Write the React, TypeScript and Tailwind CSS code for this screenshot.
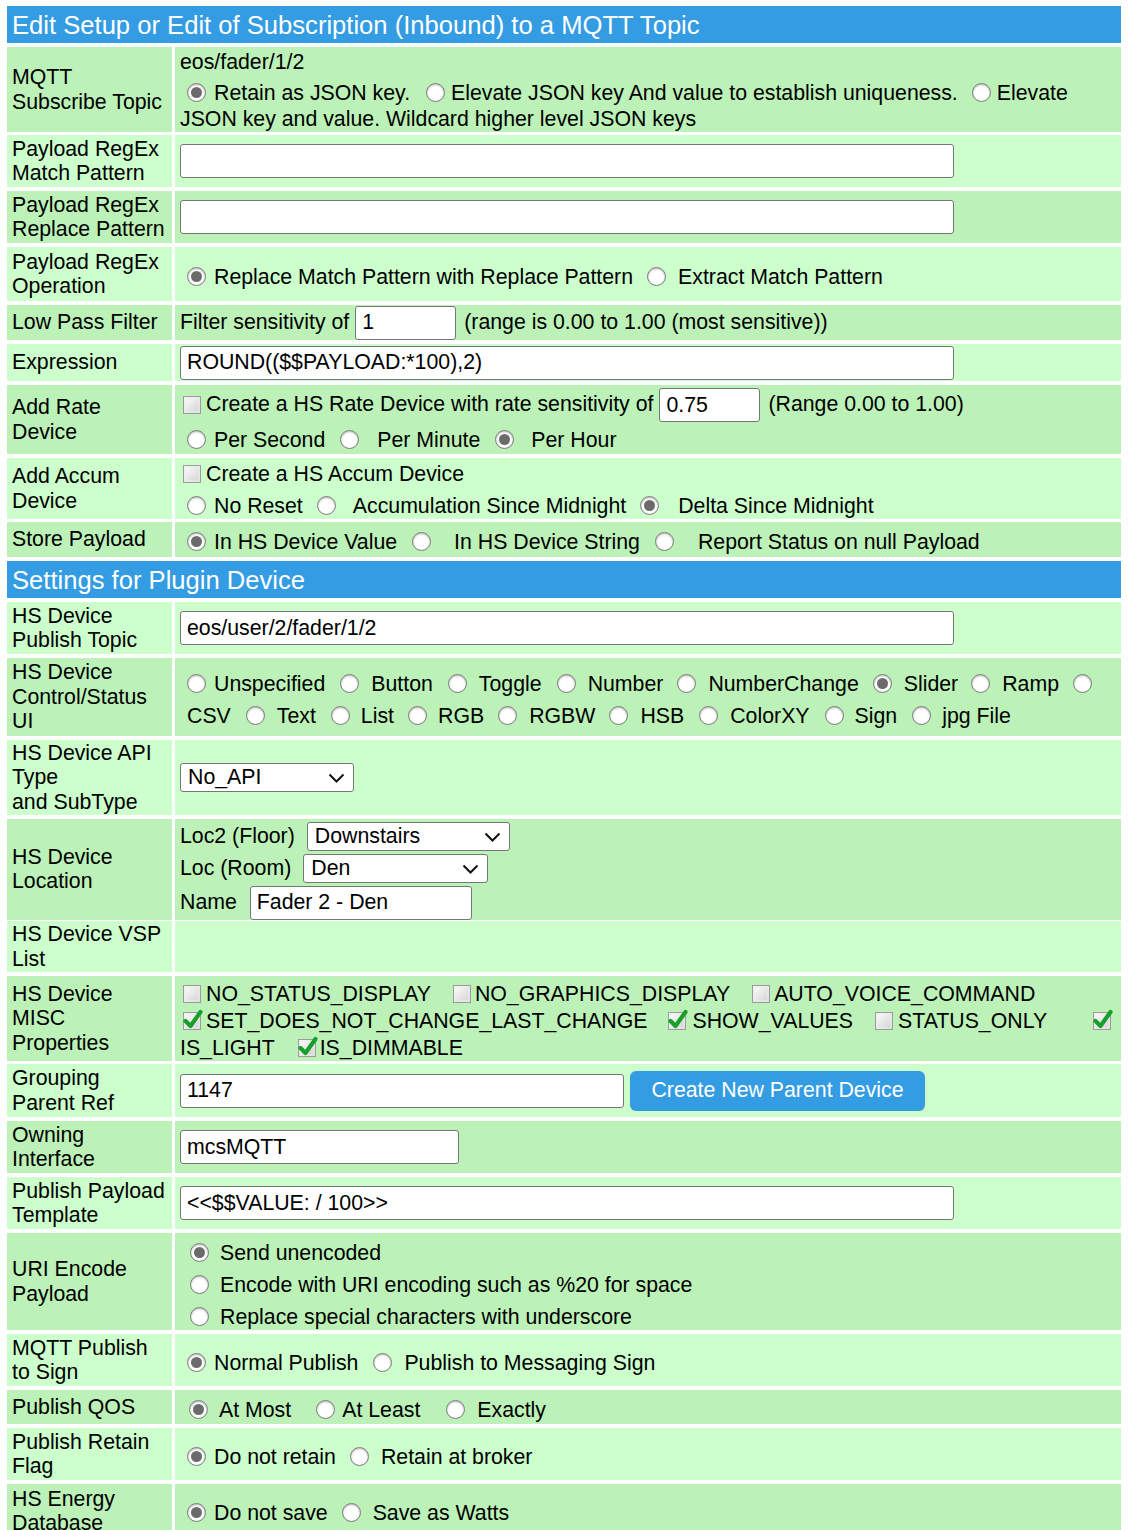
import type { ReactNode } from 'react'

const dark = 'bg-[#bcf2b8]'
const light = 'bg-[#ccffcc]'

function Rd({ on, className = '' }: { on?: boolean; className?: string }) {
  return (
    <span
      className={`mb-[3px] flex h-[19px] w-[19px] shrink-0 items-center justify-center rounded-full border-[1.5px] border-[#7c7c7c] bg-white shadow-[inset_0_1px_2px_rgba(0,0,0,0.3)] ${className}`}
    >
      {on && <span className="h-[11px] w-[11px] rounded-full bg-[#6b6b6b]" />}
    </span>
  )
}

function Cb({ on, className = '' }: { on?: boolean; className?: string }) {
  return (
    <svg width="18" height="18" viewBox="0 0 18 18" className={`mb-[1px] shrink-0 overflow-visible ${className}`}>
      <defs>
        <linearGradient id="cbg" x1="0" y1="0" x2="1" y2="1">
          <stop offset="0" stopColor="#ffffff" />
          <stop offset="1" stopColor="#d0d0d0" />
        </linearGradient>
      </defs>
      <rect x="0.5" y="0.5" width="17" height="17" fill="url(#cbg)" stroke="#9c9c9c" />
      <rect x="2" y="2" width="14" height="14" fill="none" stroke="#ececec" />
      {on && (
        <path
          d="M2.5 9 L7.5 14 L17.5 0"
          fill="none"
          stroke="#16a02a"
          strokeWidth="4.2"
          strokeLinejoin="round"
          strokeLinecap="round"
        />
      )}
    </svg>
  )
}

function Field({ value = '', className = '' }: { value?: string; className?: string }) {
  return (
    <input
      readOnly
      value={value}
      className={`h-[34px] shrink-0 rounded-[3px] border border-[#767676] bg-white px-[6px] text-[21.3px] text-black outline-none ${className}`}
    />
  )
}

function Pick({ value, className = '' }: { value: string; className?: string }) {
  return (
    <div
      className={`flex h-[29px] shrink-0 items-center justify-between rounded-[3px] border border-[#767676] bg-white pl-[7px] pr-[8px] ${className}`}
    >
      <span>{value}</span>
      <svg width="17" height="10" viewBox="0 0 17 10">
        <path d="M1.5 1.5 L8.5 8.5 L15.5 1.5" fill="none" stroke="#111" strokeWidth="2" />
      </svg>
    </div>
  )
}

function Line({ children, className = '' }: { children?: ReactNode; className?: string }) {
  return <div className={`flex h-[25px] items-center whitespace-nowrap ${className}`}>{children}</div>
}

function Head({ title }: { title: string }) {
  return (
    <div className="flex h-[37px] items-center bg-[#349ce3] pl-[5px] pt-[1px] text-[25.6px] text-white">{title}</div>
  )
}

function Row({
  label,
  tone,
  h,
  pad = '',
  children,
}: {
  label: string[]
  tone: string
  h: string
  pad?: string
  children?: ReactNode
}) {
  return (
    <div className={`grid grid-cols-[165px_1fr] gap-x-[3px] ${h}`}>
      <div className={`flex flex-col justify-center pl-[5px] leading-[24.5px] ${tone}`}>
        {label.map((l) => (
          <div key={l}>{l}</div>
        ))}
      </div>
      <div className={`flex flex-col justify-center pl-[5px] ${tone} ${pad}`}>{children}</div>
    </div>
  )
}

export default function App() {
  return (
    <div className="min-h-[1530px] bg-white pl-[7px] pt-[6px] font-['Liberation_Sans',Arial,sans-serif] text-[21.3px] text-black">
      <div className="flex w-[1114px] flex-col gap-y-[4px]">
        <Head title="Edit Setup or Edit of Subscription (Inbound) to a MQTT Topic" />

        <Row label={['MQTT', 'Subscribe Topic']} tone={dark} h="h-[84px]" pad="pt-[3px]">
          <Line>eos/fader/1/2</Line>
          <Line className="mt-[6px]">
            <Rd on className="ml-[7px] mr-[8px]" />
            Retain as JSON key.
            <Rd className="ml-[16px] mr-[6px]" />
            Elevate JSON key And value to establish uniqueness.
            <Rd className="ml-[14px] mr-[6px]" />
            Elevate
          </Line>
          <Line className="mt-[1px]">JSON key and value. Wildcard higher level JSON keys</Line>
        </Row>

        <Row label={['Payload RegEx', 'Match Pattern']} tone={light} h="h-[52px]">
          <Field className="w-[774px]" />
        </Row>

        <Row label={['Payload RegEx', 'Replace Pattern']} tone={dark} h="h-[52px]">
          <Field className="w-[774px]" />
        </Row>

        <Row label={['Payload RegEx', 'Operation']} tone={light} h="h-[54px]" pad="pt-[7px]">
          <Line>
            <Rd on className="ml-[7px] mr-[8px]" />
            Replace Match Pattern with Replace Pattern
            <Rd className="ml-[14px] mr-[12px]" />
            Extract Match Pattern
          </Line>
        </Row>

        <Row label={['Low Pass Filter']} tone={dark} h="h-[35px]">
          <div className="flex items-center whitespace-nowrap">
            Filter sensitivity of
            <Field value="1" className="ml-[6px] h-[33px] w-[101px]" />
            <span className="ml-[8px]">(range is 0.00 to 1.00 (most sensitive))</span>
          </div>
        </Row>

        <Row label={['Expression']} tone={light} h="h-[37px]">
          <Field value="ROUND(($$PAYLOAD:*100),2)" className="h-[33px] w-[774px]" />
        </Row>

        <Row label={['Add Rate', 'Device']} tone={dark} h="h-[69px]" pad="pt-[2px]">
          <div className="flex items-center whitespace-nowrap">
            <Cb className="ml-[3px] mr-[5px]" />
            Create a HS Rate Device with rate sensitivity of
            <Field value="0.75" className="ml-[6px] h-[33px] w-[101px]" />
            <span className="ml-[8px]">(Range 0.00 to 1.00)</span>
          </div>
          <Line className="mt-[6px]">
            <Rd className="ml-[7px] mr-[8px]" />
            Per Second
            <Rd className="ml-[15px] mr-[18px]" />
            Per Minute
            <Rd on className="ml-[15px] mr-[17px]" />
            Per Hour
          </Line>
        </Row>

        <Row label={['Add Accum', 'Device']} tone={light} h="h-[60px]" pad="pt-[4px]">
          <Line>
            <Cb className="ml-[3px] mr-[5px]" />
            Create a HS Accum Device
          </Line>
          <Line className="mt-[7px]">
            <Rd className="ml-[7px] mr-[8px]" />
            No Reset
            <Rd className="ml-[14px] mr-[17px]" />
            Accumulation Since Midnight
            <Rd on className="ml-[14px] mr-[19px]" />
            Delta Since Midnight
          </Line>
        </Row>

        <Row label={['Store Payload']} tone={dark} h="h-[35px]" pad="pt-[6px]">
          <Line>
            <Rd on className="ml-[7px] mr-[8px]" />
            In HS Device Value
            <Rd className="ml-[15px] mr-[23px]" />
            In HS Device String
            <Rd className="ml-[15px] mr-[24px]" />
            Report Status on null Payload
          </Line>
        </Row>

        <Head title="Settings for Plugin Device" />

        <Row label={['HS Device', 'Publish Topic']} tone={light} h="h-[52px]">
          <Field value="eos/user/2/fader/1/2" className="w-[774px]" />
        </Row>

        <Row label={['HS Device', 'Control/Status', 'UI']} tone={dark} h="h-[78px]" pad="pt-[8px]">
          <Line>
            <Rd className="ml-[7px] mr-[8px]" />
            Unspecified
            <Rd className="ml-[15px] mr-[12px]" />
            Button
            <Rd className="ml-[15px] mr-[12px]" />
            Toggle
            <Rd className="ml-[15px] mr-[12px]" />
            Number
            <Rd className="ml-[14px] mr-[12px]" />
            NumberChange
            <Rd on className="ml-[14px] mr-[12px]" />
            Slider
            <Rd className="ml-[13px] mr-[12px]" />
            Ramp
            <Rd className="ml-[14px]" />
          </Line>
          <Line className="mt-[7px]">
            <span className="ml-[7px]">CSV</span>
            <Rd className="ml-[15px] mr-[12px]" />
            Text
            <Rd className="ml-[15px] mr-[11px]" />
            List
            <Rd className="ml-[14px] mr-[11px]" />
            RGB
            <Rd className="ml-[14px] mr-[12px]" />
            RGBW
            <Rd className="ml-[14px] mr-[12px]" />
            HSB
            <Rd className="ml-[15px] mr-[12px]" />
            ColorXY
            <Rd className="ml-[15px] mr-[11px]" />
            Sign
            <Rd className="ml-[15px] mr-[11px]" />
            jpg File
          </Line>
        </Row>

        <Row label={['HS Device API', 'Type', 'and SubType']} tone={light} h="h-[75px]">
          <Pick value="No_API" className="w-[174px]" />
        </Row>

        <Row label={['HS Device', 'Location']} tone={dark} h="h-[98px]" pad="pt-[2px]">
          <div className="flex items-center whitespace-nowrap">
            Loc2 (Floor)
            <Pick value="Downstairs" className="ml-[12px] w-[203px]" />
          </div>
          <div className="flex items-center whitespace-nowrap">
            Loc (Room)
            <Pick value="Den" className="ml-[12px] w-[185px]" />
          </div>
          <div className="mt-[1px] flex items-center whitespace-nowrap">
            Name
            <Field value="Fader 2 - Den" className="ml-[13px] h-[33px] w-[222px]" />
          </div>
        </Row>

        <Row label={['HS Device VSP', 'List']} tone={light} h="h-[51px]" />

        <Row label={['HS Device', 'MISC', 'Properties']} tone={dark} h="h-[84px]" pad="pt-[6px]">
          <Line>
            <Cb className="ml-[3px] mr-[5px]" />
            NO_STATUS_DISPLAY
            <Cb className="ml-[22px] mr-[4px]" />
            NO_GRAPHICS_DISPLAY
            <Cb className="ml-[22px] mr-[4px]" />
            AUTO_VOICE_COMMAND
          </Line>
          <Line className="mt-[2px]">
            <Cb on className="ml-[3px] mr-[5px]" />
            SET_DOES_NOT_CHANGE_LAST_CHANGE
            <Cb on className="ml-[21px] mr-[6px]" />
            SHOW_VALUES
            <Cb className="ml-[22px] mr-[5px]" />
            STATUS_ONLY
            <Cb on className="ml-[46px]" />
          </Line>
          <Line className="mt-[2px]">
            IS_LIGHT
            <Cb on className="ml-[23px] mr-[4px]" />
            IS_DIMMABLE
          </Line>
        </Row>

        <Row label={['Grouping', 'Parent Ref']} tone={light} h="h-[53px]">
          <div className="flex items-center">
            <Field value="1147" className="w-[444px]" />
            <button className="ml-[6px] h-[40px] w-[295px] rounded-[6px] bg-[#349ce3] text-white">
              Create New Parent Device
            </button>
          </div>
        </Row>

        <Row label={['Owning', 'Interface']} tone={dark} h="h-[52px]">
          <Field value="mcsMQTT" className="w-[279px]" />
        </Row>

        <Row label={['Publish Payload', 'Template']} tone={light} h="h-[52px]">
          <Field value="<<$$VALUE: / 100>>" className="w-[774px]" />
        </Row>

        <Row label={['URI Encode', 'Payload']} tone={dark} h="h-[97px]" pad="pt-[8px]">
          <Line>
            <Rd on className="ml-[10px] mr-[11px]" />
            Send unencoded
          </Line>
          <Line className="mt-[7px]">
            <Rd className="ml-[10px] mr-[11px]" />
            Encode with URI encoding such as %20 for space
          </Line>
          <Line className="mt-[7px]">
            <Rd className="ml-[10px] mr-[11px]" />
            Replace special characters with underscore
          </Line>
        </Row>

        <Row label={['MQTT Publish', 'to Sign']} tone={light} h="h-[52px]" pad="pt-[8px]">
          <Line>
            <Rd on className="ml-[7px] mr-[8px]" />
            Normal Publish
            <Rd className="ml-[15px] mr-[12px]" />
            Publish to Messaging Sign
          </Line>
        </Row>

        <Row label={['Publish QOS']} tone={dark} h="h-[34px]" pad="pt-[8px]">
          <Line>
            <Rd on className="ml-[9px] mr-[11px]" />
            At Most
            <Rd className="ml-[25px] mr-[7px]" />
            At Least
            <Rd className="ml-[26px] mr-[12px]" />
            Exactly
          </Line>
        </Row>

        <Row label={['Publish Retain', 'Flag']} tone={light} h="h-[52px]" pad="pt-[8px]">
          <Line>
            <Rd on className="ml-[7px] mr-[8px]" />
            Do not retain
            <Rd className="ml-[14px] mr-[12px]" />
            Retain at broker
          </Line>
        </Row>

        <Row label={['HS Energy', 'Database']} tone={dark} h="h-[54px]" pad="pt-[6px]">
          <Line>
            <Rd on className="ml-[7px] mr-[8px]" />
            Do not save
            <Rd className="ml-[14px] mr-[12px]" />
            Save as Watts
          </Line>
        </Row>
      </div>
    </div>
  )
}
